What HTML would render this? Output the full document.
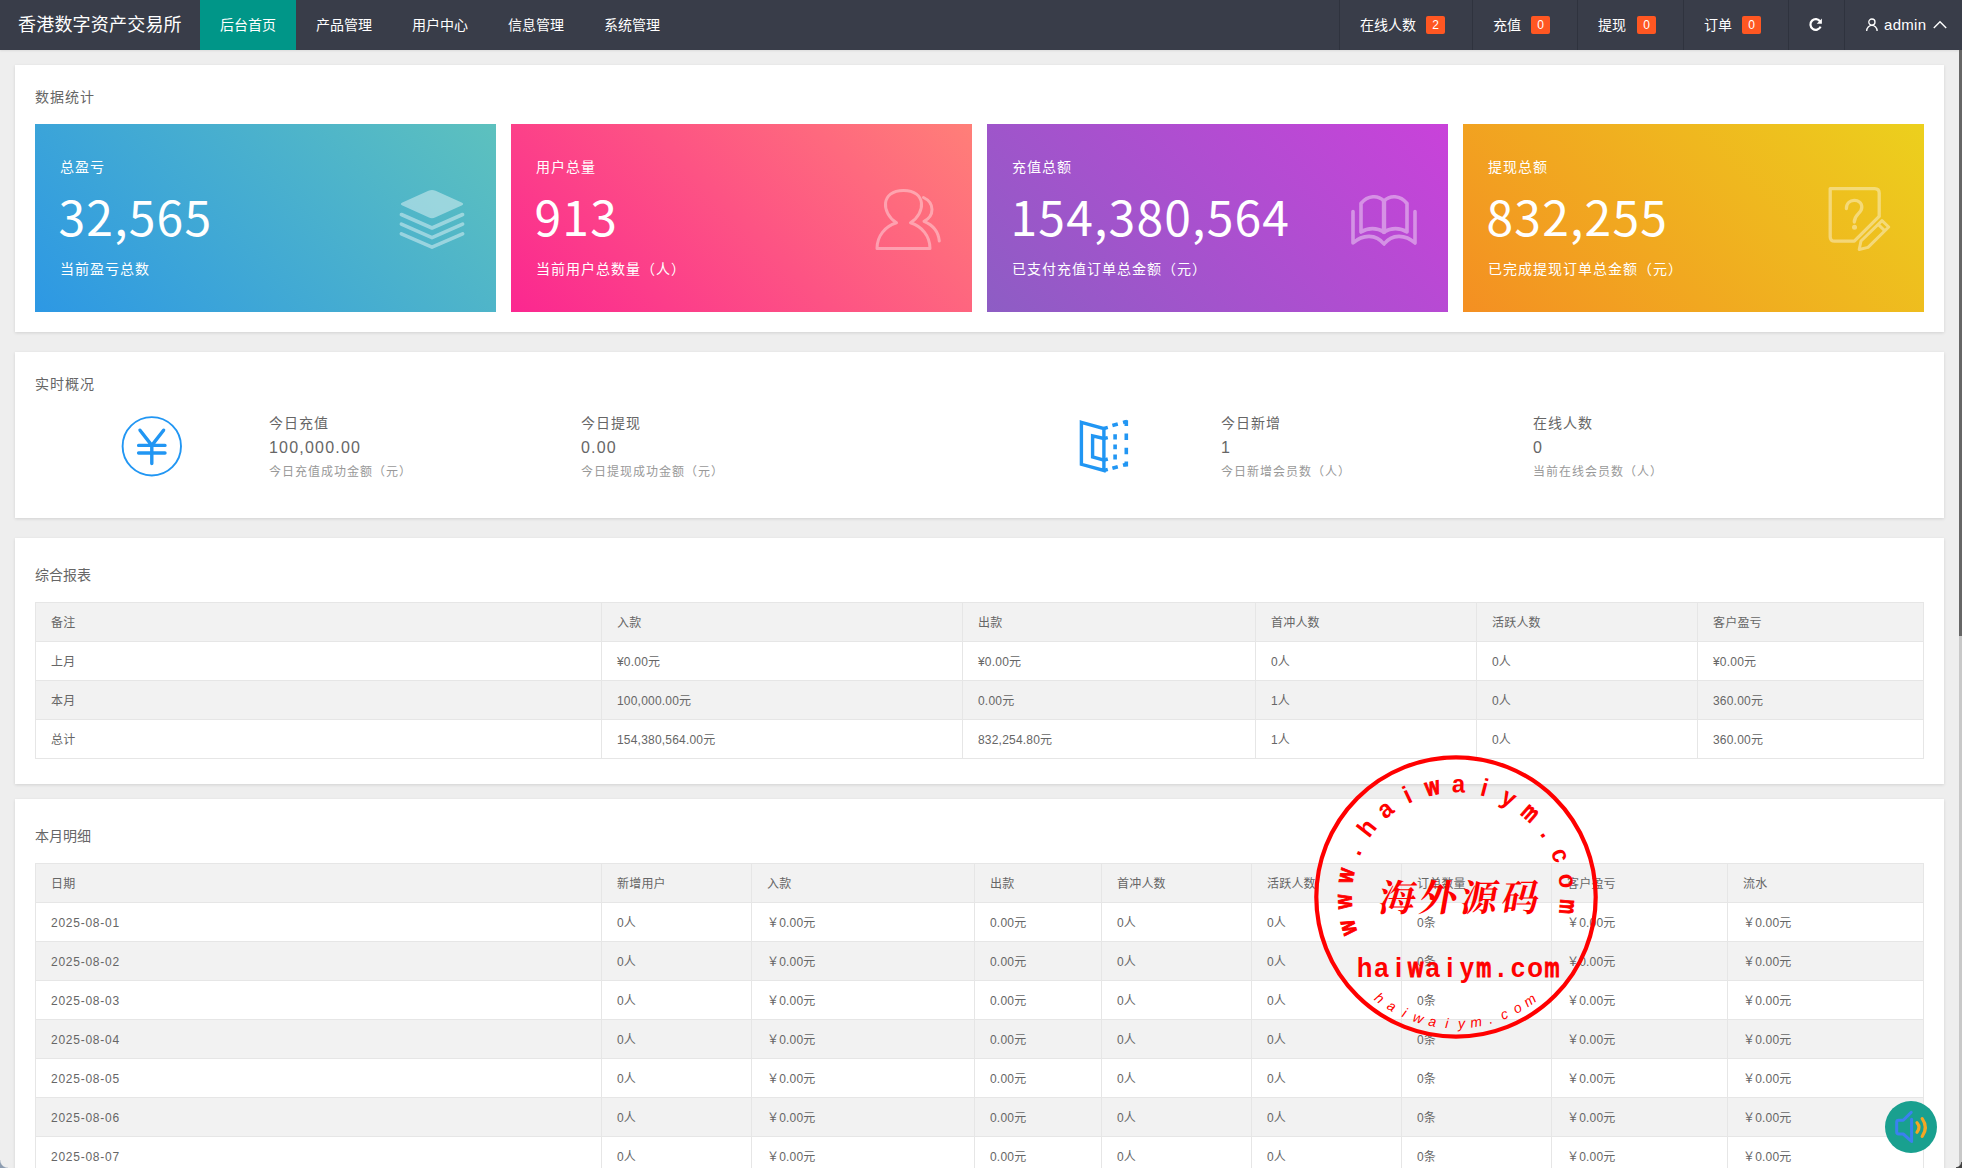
<!DOCTYPE html><html lang="zh-CN"><head><meta charset="utf-8"><title>香港数字资产交易所</title><style>
*{box-sizing:border-box;margin:0;padding:0}
html,body{width:1962px;height:1168px;overflow:hidden}
body{background:#eee;font-family:"Liberation Sans","Noto Sans CJK SC",sans-serif;font-size:14px;color:#666;position:relative}
.hd{position:absolute;left:0;top:0;width:1962px;height:50px;background:#393D49;color:#fff;box-shadow:0 1px 2px rgba(0,0,0,.08)}
.logo{position:absolute;left:18px;top:0;height:50px;line-height:51px;font-size:18px;letter-spacing:.2px;color:#fff;white-space:nowrap}
.nav{position:absolute;left:200px;top:0;height:50px;display:flex}
.nav div{width:96px;height:50px;line-height:50px;text-align:center;font-size:14px;color:#fff}
.nav div.on{background:#009688}
.ri{position:absolute;top:0;height:50px;border-left:1px solid #2f333e;line-height:50px;font-size:14px;color:#fff;padding-left:20px;white-space:nowrap}
.bdg{position:absolute;top:16px;height:18px;line-height:19px;width:19px;text-align:center;font-size:12px;background:#FF5722;color:#fff;border-radius:2px}
.card{position:absolute;left:15px;width:1929px;background:#fff;box-shadow:0 1px 3px rgba(0,0,0,.12)}
.tt{position:absolute;left:20px;font-size:14px;letter-spacing:1px;color:#666;line-height:24px;white-space:nowrap}
.st{position:absolute;top:59px;width:461px;height:188px;color:#fff}
.st .a{position:absolute;left:25px;top:31px;font-size:14px;letter-spacing:1px;line-height:24px;white-space:nowrap}
.st .n{position:absolute;left:23.5px;top:60.5px;font-family:"Noto Sans CJK SC","Liberation Sans",sans-serif;font-size:48px;letter-spacing:1.2px;line-height:60px;white-space:nowrap}
.st .b{position:absolute;left:25px;top:133px;font-size:14px;letter-spacing:1px;line-height:24px;white-space:nowrap}
.st svg{position:absolute}
.rt{position:absolute;white-space:nowrap;letter-spacing:1px}
.rt .a{font-size:14px;line-height:24px;color:#666}
.rt .n{font-size:16px;line-height:24px;color:#666;letter-spacing:1.2px;position:relative;top:1px}
.rt .b{font-size:12px;line-height:24px;color:#999;position:relative;top:1px}
table{position:absolute;left:20px;border-collapse:collapse;table-layout:fixed;width:1888px;font-size:12px;color:#666}
td,th{border:1px solid #e6e6e6;height:39px;padding:2px 15px 0;text-align:left;font-weight:normal;line-height:20px;white-space:nowrap;overflow:hidden;letter-spacing:.2px}
td.d{letter-spacing:.75px}
th{background:#f2f2f2}
tr.ev td{background:#f2f2f2}
</style></head><body>
<div class="hd">
<div class="logo">香港数字资产交易所</div>
<div class="nav"><div class="on">后台首页</div><div>产品管理</div><div>用户中心</div><div>信息管理</div><div>系统管理</div></div>
<div class="ri" style="left:1339px;width:133px">在线人数</div><div class="bdg" style="left:1426px">2</div>
<div class="ri" style="left:1472px;width:105px">充值</div><div class="bdg" style="left:1531px">0</div>
<div class="ri" style="left:1577px;width:106px">提现</div><div class="bdg" style="left:1637px">0</div>
<div class="ri" style="left:1683px;width:105px">订单</div><div class="bdg" style="left:1742px">0</div>
<div class="ri" style="left:1788px;width:56px"></div>
<div class="ri" style="left:1844px;width:118px"></div>
<svg style="position:absolute;left:1805.4px;top:15px" width="20" height="20" viewBox="0 0 20 20"><path d="M15.2 6.6 A5.3 5.3 0 1 0 15.6 11.6" fill="none" stroke="#fff" stroke-width="2.2"/><path d="M16.9 3.6 L16.9 8.8 L11.7 8.8 Z" fill="#fff"/></svg>
<svg style="position:absolute;left:1864px;top:16px" width="16" height="16" viewBox="0 0 16 16"><circle cx="7.9" cy="6.1" r="3.1" fill="none" stroke="#fff" stroke-width="1.3"/><path d="M2.7 15 A5.2 5.6 0 0 1 13.1 15" fill="none" stroke="#fff" stroke-width="1.3"/></svg>
<div style="position:absolute;left:1884px;top:0;line-height:49px;font-size:15px;letter-spacing:.3px;color:#fff">admin</div>
<svg style="position:absolute;left:1932px;top:19px" width="16" height="12" viewBox="0 0 16 12"><path d="M1.8 9 L8 2.8 L14.2 9" fill="none" stroke="#fff" stroke-width="1.4"/></svg>
</div>
<div class="card" style="top:65px;height:267px">
<div class="tt" style="top:20px">数据统计</div>
<div class="st" style="left:20px;background:linear-gradient(45deg,#2d98e4,#5dc1be)"><div class="a">总盈亏</div><div class="n">32,565</div><div class="b">当前盈亏总数</div><svg style="left:0;top:0" width="461" height="188"><g fill="#fff" opacity=".42"><path d="M393.4 66.8 Q397.0 65.1 400.6 66.8 L426.6 78.6 Q429.8 80.0 426.6 81.5 L400.6 93.3 Q397.0 95.0 393.4 93.3 L367.4 81.5 Q364.2 80.0 367.4 78.6 Z"/></g><g fill="none" stroke="#fff" opacity=".42" stroke-width="3.6" stroke-linecap="round" stroke-linejoin="round"><path d="M366.4 90.5 L397 104 L427.6 90.5"/><path d="M366.4 100.1 L397 113.6 L427.6 100.1"/><path d="M366.4 109.8 L397 123.2 L427.6 109.8"/></g></svg></div>
<div class="st" style="left:496px;background:linear-gradient(45deg,#fb2790,#ff7f78)"><div class="a">用户总量</div><div class="n">913</div><div class="b">当前用户总数量（人）</div><svg style="left:0;top:0" width="461" height="188"><g fill="none" stroke="#fff" opacity=".38" stroke-width="3" stroke-linecap="round" stroke-linejoin="round"><path d="M385.5 98.8 C370 89 369.5 66.5 392.5 66.5 C415.5 66.5 415 89 399.5 98.8 C411 102.5 419 112 419 124.5 L366 124.5 C366 112 374 102.5 385.5 98.8 Z"/><path d="M412.5 73.5 C424 79 423.5 92 413 97.3 C422 101 427.5 108 428.3 117"/></g></svg></div>
<div class="st" style="left:972px;background:linear-gradient(45deg,#8d5dc4,#c942da)"><div class="a">充值总额</div><div class="n">154,380,564</div><div class="b">已支付充值订单总金额（元）</div><svg style="left:0;top:0" width="461" height="188"><g fill="none" stroke="#fff" opacity=".4" stroke-width="3.6" stroke-linecap="round" stroke-linejoin="round"><path d="M366 87.5 L366 119 C376 110 389 110 397 120 C405 110 418 110 428 119 L428 87.5"/><path d="M374 108 L374 79.5 C381 71 391 71 397 77 C403 71 413 71 420 79.5 L420 108 C413 103.5 404 103.5 397 108 C390 103.5 381 103.5 374 108 Z"/><path d="M397 77 L397 108" stroke-width="4.4"/></g></svg></div>
<div class="st" style="left:1448px;background:linear-gradient(45deg,#f48f22,#ecd01d)"><div class="a">提现总额</div><div class="n">832,255</div><div class="b">已完成提现订单总金额（元）</div><svg style="left:0;top:0" width="461" height="188"><g fill="none" stroke="#fff" opacity=".4" stroke-width="3.3" stroke-linejoin="round"><path d="M367.2 64.6 L411.7 64.6 Q416.2 64.6 416.2 69.1 L416.2 92.4 L391.3 117.2 L371.7 117.2 Q367.2 117.2 367.2 112.7 Z"/><path d="M419 96.6 L425.7 103 L405 123.4 L396.2 125.5 L398 117 Z" stroke-width="3"/><path d="M415.2 100.4 L421.9 106.8" stroke-width="3"/></g><g fill="none" stroke="#fff" opacity=".4" stroke-width="3.3" stroke-linecap="round"><path d="M383.4 84.5 C383.4 74 398.8 74 398.8 83 C399 89.5 391.3 90 391.3 98"/></g><circle cx="391.5" cy="103.2" r="2.5" fill="#fff" opacity=".4"/></svg></div>
</div>
<div class="card" style="top:352px;height:166px">
<div class="tt" style="top:20px">实时概况</div>
<svg style="position:absolute;left:0;top:0" width="1929" height="166"><g fill="none" stroke="#2196F3" stroke-linecap="round" stroke-linejoin="round"><circle cx="136.8" cy="94.3" r="29.2" stroke-width="1.9"/><path d="M125 78.2 L136.8 93.4 L148.6 78.2 M123.6 93.4 L150 93.4 M123.6 101 L150 101 M136.8 93.4 L136.8 111.5" stroke-width="3.4"/></g><g fill="none" stroke="#2196F3" stroke-width="3.4"><path d="M1066.4 70.3 L1088.9 76.5 L1088.9 118.5 L1066.4 112.3 Z"/><path d="M1088.9 86.5 L1077.6 83.8 L1077.6 105 L1088.9 108.1"/><path d="M1088.9 76.5 L1092.8 75.4 M1088.9 86.5 L1092.8 85.6 M1088.9 108.1 L1092.8 107 M1088.9 118.5 L1092.8 117.4"/></g><g fill="none" stroke="#2196F3" stroke-width="3.6"><path d="M1111.3 68.3 L1111.3 114.6" stroke-dasharray="5.6 7.6 6.6 7.6 6.6 7.2 5.2 20"/><path d="M1100.1 82.2 L1100.1 108" stroke-dasharray="5.4 4.8 4.8 5.2 5 20"/><path d="M1097.4 73.6 L1102.8 72.1" /><path d="M1108 70.6 L1112 69.6"/><path d="M1097.4 116.2 L1102.8 114.7"/><path d="M1108 113.2 L1112 112.2"/></g></svg>
<div class="rt" style="left:254px;top:59px"><div class="a">今日充值</div><div class="n">100,000.00</div><div class="b">今日充值成功金额（元）</div></div>
<div class="rt" style="left:566px;top:59px"><div class="a">今日提现</div><div class="n">0.00</div><div class="b">今日提现成功金额（元）</div></div>
<div class="rt" style="left:1206px;top:59px"><div class="a">今日新增</div><div class="n">1</div><div class="b">今日新增会员数（人）</div></div>
<div class="rt" style="left:1518px;top:59px"><div class="a">在线人数</div><div class="n">0</div><div class="b">当前在线会员数（人）</div></div>
</div>
<div class="card" style="top:538px;height:246px">
<div class="tt" style="top:25px;letter-spacing:0">综合报表</div>
<table style="top:64px"><colgroup><col style="width:566px"><col style="width:361px"><col style="width:293px"><col style="width:221px"><col style="width:221px"><col style="width:226px"></colgroup><tr><th>备注</th><th>入款</th><th>出款</th><th>首冲人数</th><th>活跃人数</th><th>客户盈亏</th></tr><tr><td>上月</td><td>¥0.00元</td><td>¥0.00元</td><td>0人</td><td>0人</td><td>¥0.00元</td></tr><tr class="ev"><td>本月</td><td>100,000.00元</td><td>0.00元</td><td>1人</td><td>0人</td><td>360.00元</td></tr><tr><td>总计</td><td>154,380,564.00元</td><td>832,254.80元</td><td>1人</td><td>0人</td><td>360.00元</td></tr></table>
</div>
<div class="card" style="top:799px;height:420px">
<div class="tt" style="top:25px;letter-spacing:0">本月明细</div>
<table style="top:64px"><colgroup><col style="width:566px"><col style="width:150px"><col style="width:223px"><col style="width:127px"><col style="width:150px"><col style="width:150px"><col style="width:150px"><col style="width:176px"><col style="width:196px"></colgroup><tr><th>日期</th><th>新增用户</th><th>入款</th><th>出款</th><th>首冲人数</th><th>活跃人数</th><th>订单数量</th><th>客户盈亏</th><th>流水</th></tr><tr><td class="d">2025-08-01</td><td>0人</td><td>￥0.00元</td><td>0.00元</td><td>0人</td><td>0人</td><td>0条</td><td>￥0.00元</td><td>￥0.00元</td></tr><tr class="ev"><td class="d">2025-08-02</td><td>0人</td><td>￥0.00元</td><td>0.00元</td><td>0人</td><td>0人</td><td>0条</td><td>￥0.00元</td><td>￥0.00元</td></tr><tr><td class="d">2025-08-03</td><td>0人</td><td>￥0.00元</td><td>0.00元</td><td>0人</td><td>0人</td><td>0条</td><td>￥0.00元</td><td>￥0.00元</td></tr><tr class="ev"><td class="d">2025-08-04</td><td>0人</td><td>￥0.00元</td><td>0.00元</td><td>0人</td><td>0人</td><td>0条</td><td>￥0.00元</td><td>￥0.00元</td></tr><tr><td class="d">2025-08-05</td><td>0人</td><td>￥0.00元</td><td>0.00元</td><td>0人</td><td>0人</td><td>0条</td><td>￥0.00元</td><td>￥0.00元</td></tr><tr class="ev"><td class="d">2025-08-06</td><td>0人</td><td>￥0.00元</td><td>0.00元</td><td>0人</td><td>0人</td><td>0条</td><td>￥0.00元</td><td>￥0.00元</td></tr><tr><td class="d">2025-08-07</td><td>0人</td><td>￥0.00元</td><td>0.00元</td><td>0人</td><td>0人</td><td>0条</td><td>￥0.00元</td><td>￥0.00元</td></tr><tr class="ev"><td class="d">2025-08-08</td><td>0人</td><td>￥0.00元</td><td>0.00元</td><td>0人</td><td>0人</td><td>0条</td><td>￥0.00元</td><td>￥0.00元</td></tr></table>
</div>
<svg style="position:absolute;left:0;top:0;pointer-events:none" width="1962" height="1168" viewBox="0 0 1962 1168"><circle cx="1456.0" cy="897.0" r="139.7" fill="none" stroke="#f00" stroke-width="4.2"/><g font-family="Liberation Sans, sans-serif" font-weight="bold" font-size="25" fill="#f00" text-anchor="middle"><text transform="translate(1355.4 925.5) rotate(-105.8) scale(0.74 1)" stroke="#f00" stroke-width="1.1">w</text><text transform="translate(1351.6 901.4) rotate(-92.4) scale(0.74 1)" stroke="#f00" stroke-width="1.1">w</text><text transform="translate(1353.4 877.1) rotate(-79.0) scale(0.74 1)" stroke="#f00" stroke-width="1.1">w</text><text transform="translate(1360.8 853.9) rotate(-65.6) scale(0.95 1)">.</text><text transform="translate(1373.4 833.0) rotate(-52.3) scale(0.95 1)">h</text><text transform="translate(1390.4 815.6) rotate(-38.9) scale(0.95 1)">a</text><text transform="translate(1411.0 802.7) rotate(-25.5) scale(0.95 1)">i</text><text transform="translate(1434.1 794.8) rotate(-12.1) scale(0.74 1)" stroke="#f00" stroke-width="1.1">w</text><text transform="translate(1458.4 792.5) rotate(1.3) scale(0.95 1)">a</text><text transform="translate(1482.5 795.9) rotate(14.7) scale(0.95 1)">i</text><text transform="translate(1505.2 804.8) rotate(28.1) scale(0.95 1)">y</text><text transform="translate(1525.2 818.7) rotate(41.5) scale(0.66 1)" stroke="#f00" stroke-width="1.1">m</text><text transform="translate(1541.4 836.8) rotate(54.8) scale(0.95 1)">.</text><text transform="translate(1553.0 858.2) rotate(68.2) scale(0.95 1)">c</text><text transform="translate(1559.4 881.8) rotate(81.6) scale(0.95 1)">o</text><text transform="translate(1560.1 906.1) rotate(95.0) scale(0.66 1)" stroke="#f00" stroke-width="1.1">m</text></g><g font-family="Liberation Sans, sans-serif" font-style="italic" font-size="14" fill="#f00" text-anchor="middle"><text transform="translate(1376.7 1001.9) rotate(37.1)">h</text><text transform="translate(1389.3 1010.3) rotate(30.5)">a</text><text transform="translate(1402.7 1017.2) rotate(23.9)">i</text><text transform="translate(1416.9 1022.6) rotate(17.3)">w</text><text transform="translate(1431.6 1026.2) rotate(10.7)">a</text><text transform="translate(1446.6 1028.2) rotate(4.1)">i</text><text transform="translate(1461.7 1028.4) rotate(-2.5)">y</text><text transform="translate(1476.8 1026.8) rotate(-9.1)">m</text><text transform="translate(1491.6 1023.6) rotate(-15.7)">.</text><text transform="translate(1505.9 1018.7) rotate(-22.3)">c</text><text transform="translate(1519.6 1012.1) rotate(-28.9)">o</text><text transform="translate(1532.4 1004.1) rotate(-35.5)">m</text></g><g font-family="Noto Serif CJK SC, serif" font-weight="bold" font-size="37" fill="#f00" text-anchor="middle" transform="translate(1457 911) skewX(-10)"><text x="-61.5 -20.5 20.5 61.5" y="0">海外源码</text></g><g font-family="Liberation Sans, sans-serif" font-weight="bold" font-size="28" fill="#f00" text-anchor="middle"><text transform="translate(1364.5 977) scale(0.92 1)">h</text><text transform="translate(1381.5 977) scale(0.92 1)">a</text><text transform="translate(1398.6 977) scale(0.92 1)">i</text><text transform="translate(1415.7 977) scale(0.7 1)" stroke="#f00" stroke-width="1.2">w</text><text transform="translate(1432.7 977) scale(0.92 1)">a</text><text transform="translate(1449.8 977) scale(0.92 1)">i</text><text transform="translate(1466.8 977) scale(0.92 1)">y</text><text transform="translate(1483.8 977) scale(0.62 1)" stroke="#f00" stroke-width="1.2">m</text><text transform="translate(1500.9 977) scale(0.92 1)">.</text><text transform="translate(1518.0 977) scale(0.92 1)">c</text><text transform="translate(1535.0 977) scale(0.92 1)">o</text><text transform="translate(1552.0 977) scale(0.62 1)" stroke="#f00" stroke-width="1.2">m</text></g></svg>
<div style="position:absolute;left:1885px;top:1101px;width:52px;height:52px;border-radius:50%;background:#19a08f"><svg width="52" height="52" viewBox="0 0 52 52" style="position:absolute;left:0;top:0"><g fill="none" stroke-linecap="round" stroke-linejoin="round"><path d="M26.2 11.4 L18.2 19.2 L13.6 19.2 Q11.7 19.2 11.7 21.1 L11.7 31.1 Q11.7 33 13.6 33 L18.2 33 L26.6 40.4 L26.6 18.2" stroke="#3b80f0" stroke-width="3"/><path d="M32 21.8 Q36 26.4 32 31.2" stroke="#f5a623" stroke-width="3.2"/><path d="M37.2 17.6 Q43.5 26.5 37.2 35.4" stroke="#f5a623" stroke-width="3.2"/></g></svg></div>
<div style="position:absolute;left:1959px;top:50px;width:3px;height:1118px;background:#c8c8c8"></div>
<div style="position:absolute;left:1959px;top:50px;width:3px;height:586px;background:#666"></div>
<div style="position:absolute;left:0;top:1160px;width:8px;height:8px;background:radial-gradient(circle at 100% 0,rgba(141,157,177,0) 7.2px,#8d9db1 8.4px)"></div>
<div style="position:absolute;left:1956px;top:1162px;width:6px;height:6px;background:radial-gradient(circle at 0 0,rgba(60,60,60,0) 4.6px,#444 5.6px)"></div>
</body></html>
